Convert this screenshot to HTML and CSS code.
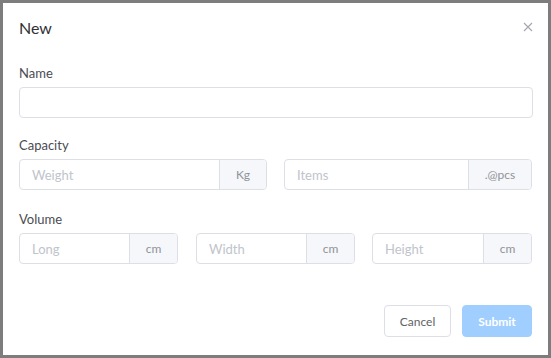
FILE: index.html
```html
<!DOCTYPE html>
<html>
<head>
<meta charset="utf-8">
<link rel="stylesheet" href="styles.css">
</head>
<body>
<div class="backdrop">
  <div class="dialog">
    <div class="header">
      <span class="title">New</span>
      <svg class="close" width="10" height="10" viewBox="0 0 10 10"><path d="M1 1L9 9M9 1L1 9" stroke="#a3a6ad" stroke-width="1.1" fill="none"/></svg>
    </div>
    <div class="body">
      <div class="field name-field">
        <label class="label">Name</label>
        <div class="input"><span class="ph"></span></div>
      </div>
      <div class="field">
        <label class="label">Capacity</label>
        <div class="row two">
          <div class="group"><div class="input-in"><span class="ph">Weight</span></div><div class="addon w47">Kg</div></div>
          <div class="group"><div class="input-in"><span class="ph">Items</span></div><div class="addon w63">.@pcs</div></div>
        </div>
      </div>
      <div class="field">
        <label class="label">Volume</label>
        <div class="row three">
          <div class="group"><div class="input-in"><span class="ph">Long</span></div><div class="addon w48">cm</div></div>
          <div class="group"><div class="input-in"><span class="ph">Width</span></div><div class="addon w48">cm</div></div>
          <div class="group"><div class="input-in"><span class="ph">Height</span></div><div class="addon w48">cm</div></div>
        </div>
      </div>
    </div>
    <div class="footer">
      <button class="btn cancel">Cancel</button>
      <button class="btn submit">Submit</button>
    </div>
  </div>
</div>
</body>
</html>
```
FILE: styles.css
```css
* { box-sizing: border-box; }
html, body { margin: 0; padding: 0; }
body { width: 551px; height: 358px; background: #7d7d7d; font-family: Lato, "Open Sans", sans-serif; overflow: hidden; }
.backdrop { padding: 3px; height: 358px; }
.dialog { background: #fff; width: 545px; height: 352px; padding: 0 16px 0 16px; display: flex; flex-direction: column; }
.header { display: flex; justify-content: space-between; align-items: center; height: 48px; padding-top: 0; }
.title { font-size: 16px; color: #303133; }
.close { margin-right: -1px; }
.body { display: flex; flex-direction: column; padding-top: 12px; }
.field { display: flex; flex-direction: column; margin-bottom: 19px; }
.name-field { margin-bottom: 17px; }
.label { font-size: 13px; color: #4a4c52; line-height: 20px; height: 20px; margin-bottom: 4px; }
.input { height: 31px; border: 1px solid #dcdfe6; border-radius: 4px; width: 514px; }
.row { display: flex; gap: 17px; width: 514px; }
.row.three > .group:nth-child(1), .row.three > .group:nth-child(2) { width: 159px; }
.row.three > .group:nth-child(3) { width: 160px; }
.row.three > .group:nth-child(2) { margin-left: 1px; }
.row.two > .group { width: 248px; }
.group { display: flex; height: 31px; border: 1px solid #dcdfe6; border-radius: 4px; overflow: hidden; }
.input-in { flex: 1; display: flex; align-items: center; padding-left: 12px; }
.ph { font-size: 13px; color: #c0c4cc; }
.addon { background: #f5f7fa; border-left: 1px solid #dcdfe6; display: flex; align-items: center; justify-content: center; font-size: 12px; color: #909399; }
.w47 { width: 47px; }
.w63 { width: 63px; }
.w48 { width: 48px; }
.footer { margin-top: auto; display: flex; justify-content: flex-end; gap: 11px; padding-bottom: 18px; padding-right: 0; }
.btn { font-family: Lato, "Open Sans", sans-serif; font-size: 12px; height: 32px; border-radius: 4px; padding: 0; }
.cancel { width: 67px; background: #fff; border: 1px solid #dcdfe6; color: #606266; }
.submit { width: 70px; background: #a0cfff; border: 1px solid #a0cfff; color: #fff; font-weight: bold; }
```
